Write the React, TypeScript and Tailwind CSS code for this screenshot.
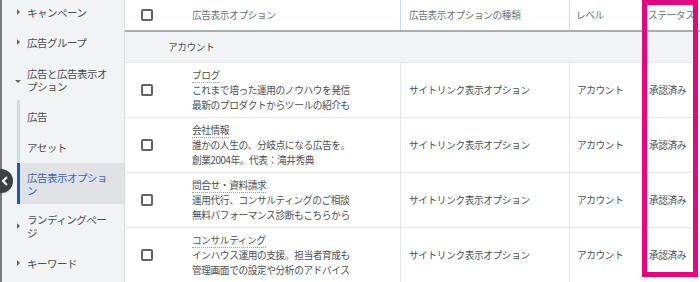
import React from "react";

const font = { fontFamily: '"Noto Sans CJK JP", "Noto Sans", sans-serif' };

function Checkbox() {
  return <div className="w-[12px] h-[12px] border-2 border-[#5f6368] rounded-[2px] bg-white" />;
}

function TriRight() {
  return (
    <div className="w-0 h-0 border-y-[3px] border-y-transparent border-l-[3px] border-l-[#5f6368]" />
  );
}

function TriDown() {
  return (
    <div className="w-0 h-0 border-x-[3px] border-x-transparent border-t-[3px] border-t-[#5f6368]" />
  );
}

const rows = [
  { title: "ブログ", l1: "これまで培った運用のノウハウを発信", l2: "最新のプロダクトからツールの紹介も" },
  { title: "会社情報", l1: "誰かの人生の、分岐点になる広告を。", l2: "創業2004年。代表：滝井秀典" },
  { title: "問合せ・資料請求", l1: "運用代行、コンサルティングのご相談", l2: "無料パフォーマンス診断もこちらから" },
  { title: "コンサルティング", l1: "インハウス運用の支援。担当者育成も", l2: "管理画面での設定や分析のアドバイス" },
];

export default function App() {
  return (
    <div
      className="relative w-[700px] h-[282px] flex overflow-hidden bg-white text-[#4a4e52]"
      style={font}
    >
      {/* Sidebar */}
      <div className="w-[125px] flex-none h-full bg-[#f1f3f4] border-l-2 border-l-[#7a7a7a] border-r border-r-[#dadce0] flex flex-col text-[10.5px] tracking-[-0.5px] leading-[13px] text-[#4a4e52]">
        <div className="h-[24px] flex items-center">
          <div className="w-[25px] flex justify-end pr-[7px]"><TriRight /></div>
          <span>キャンペーン</span>
        </div>
        <div className="h-[36px] flex items-center">
          <div className="w-[25px] flex justify-end pr-[7px]"><TriRight /></div>
          <span>広告グループ</span>
        </div>
        <div className="h-[40px] flex items-center">
          <div className="w-[25px] flex justify-end pr-[6px] pt-[3px]"><TriDown /></div>
          <span className="w-[86px]">広告と広告表示オプション</span>
        </div>
        <div className="ml-[15px] flex flex-col">
          <div className="h-[32px] flex items-center border-l-[3px] border-l-[#d6d8db] pl-[7px]">広告</div>
          <div className="h-[31px] flex items-center border-l-[3px] border-l-[#d6d8db] pl-[7px]">アセット</div>
          <div className="h-[41px] flex items-center border-l-[3px] border-l-[#1a56c4] bg-[#e0e2e6] pl-[7px] text-[#3465c4]">
            <span className="w-[86px]">広告表示オプション</span>
          </div>
        </div>
        <div className="h-[44px] flex items-center">
          <div className="w-[25px] flex justify-end pr-[7px]"><TriRight /></div>
          <span className="w-[86px]">ランディングページ</span>
        </div>
        <div className="h-[30px] flex items-center">
          <div className="w-[25px] flex justify-end pr-[7px]"><TriRight /></div>
          <span>キーワード</span>
        </div>
      </div>

      {/* Collapse button */}
      <div className="absolute left-[-11px] top-[169px] w-[24px] h-[24px] rounded-full bg-[#3c4043] shadow flex items-center justify-end pr-[4px]">
        <svg width="8" height="10" viewBox="0 0 8 10">
          <path d="M6 1 L2 5 L6 9" stroke="white" strokeWidth="2" fill="none" />
        </svg>
      </div>

      {/* Table */}
      <div className="flex-1 flex flex-col text-[9.7px] tracking-[-0.4px] leading-[15px]">
        {/* header */}
        <div className="h-[32px] flex-none grid grid-cols-[43px_232px_169px_72px_1fr] border-b-2 border-b-[#a9adb1] text-[#6b6f73]">
          <div className="flex items-center justify-center pl-[1px]"><Checkbox /></div>
          <div className="flex items-center pl-[24px]">広告表示オプション</div>
          <div className="flex items-center pl-[8px] border-l border-l-[#c6dafc]">広告表示オプションの種類</div>
          <div className="flex items-center pl-[6px] border-l border-l-[#c6dafc]">レベル</div>
          <div className="flex items-center pl-[7px] whitespace-nowrap overflow-hidden">ステータス</div>
        </div>
        {/* group row */}
        <div className="h-[31px] flex-none flex items-center bg-[#f1f3f4] border-b border-b-[#e3e5e8] pl-[43px]">
          アカウント
        </div>
        {rows.map((r, i) => (
          <div
            key={i}
            className="h-[55px] flex-none grid grid-cols-[43px_232px_169px_72px_1fr] border-b border-b-[#e3e5e8]"
          >
            <div className="flex items-center justify-center pl-[1px]"><Checkbox /></div>
            <div className="flex flex-col justify-center pl-[24px] whitespace-nowrap">
              <div>
                <span className="border-b border-dotted border-b-[#9aa0a6] leading-[13px] inline-block">{r.title}</span>
              </div>
              <div>{r.l1}</div>
              <div>{r.l2}</div>
            </div>
            <div className="flex items-center pl-[8px] border-l border-l-[#e3e5e8]">サイトリンク表示オプション</div>
            <div className="flex items-center pl-[7px] border-l border-l-[#e3e5e8]">アカウント</div>
            <div className="flex items-center pl-[8px] whitespace-nowrap">承認済み</div>
          </div>
        ))}
      </div>

      {/* Highlight frame */}
      <div className="absolute left-[642px] top-0 w-[56px] h-[277px] border-[5px] border-[#e2087e] pointer-events-none" />
    </div>
  );
}
